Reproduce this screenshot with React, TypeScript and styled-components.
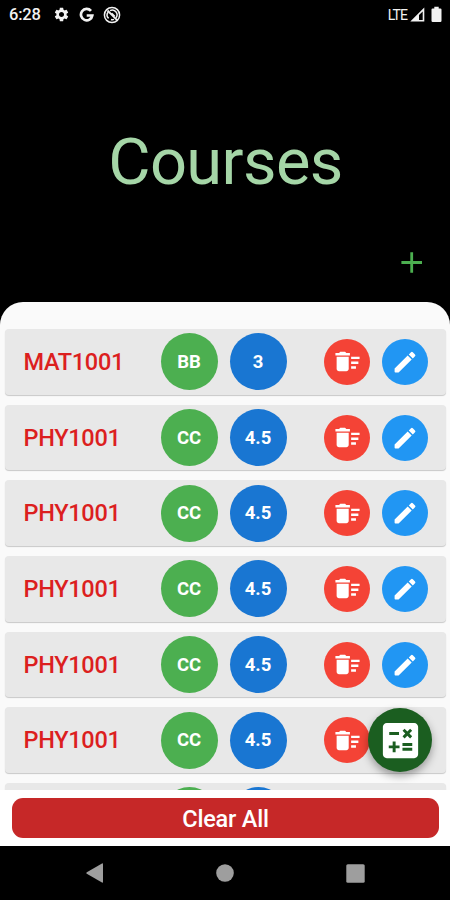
import React from "react";
import styled, { createGlobalStyle } from "styled-components";
import { MdCalculate, MdDeleteSweep, MdSettings } from "react-icons/md";

const GlobalStyle = createGlobalStyle`
  * { box-sizing: border-box; }
  body { margin: 0; background: #000; font-family: Roboto, "Liberation Sans", sans-serif; }
`;

const Screen = styled.div`
  position: relative;
  width: 450px;
  height: 900px;
  display: flex;
  flex-direction: column;
  background: #000;
  overflow: hidden;
`;

const StatusBar = styled.header`
  height: 29px;
  flex: none;
  display: flex;
  align-items: center;
  justify-content: space-between;
  padding: 0 8px 0 9px;
  color: #f2f2f2;
`;

const StatusGroup = styled.div<{ $gap: number }>`
  display: flex;
  align-items: center;
  gap: ${(p) => p.$gap}px;
`;

const Clock = styled.span`
  width: 32px;
  font-size: 16.5px;
  font-weight: 500;
  letter-spacing: -0.2px;
  margin-right: 3px;
`;

const Network = styled.span`
  font-size: 14px;
  letter-spacing: -0.9px;
`;

const Hero = styled.section`
  height: 272.5px;
  flex: none;
  display: flex;
  flex-direction: column;
  align-items: center;
`;

const Title = styled.h1`
  margin: 94px 0 0 1px;
  color: #a5d6a7;
  font-size: 65px;
  font-weight: 400;
  line-height: 78px;
  letter-spacing: -0.6px;
`;

const AddButton = styled.button`
  align-self: flex-end;
  display: flex;
  margin: 50px 26px 0 0;
  padding: 0;
  border: 0;
  background: none;
`;

const Sheet = styled.main`
  height: 544.5px;
  flex: none;
  display: flex;
  flex-direction: column;
  border-radius: 23px 23px 0 0;
  background: #fafafa;
  overflow: hidden;
`;

const CourseList = styled.ul`
  height: 488.5px;
  flex: none;
  margin: 0;
  padding: 27.6px 4px 0 5px;
  list-style: none;
  display: flex;
  flex-direction: column;
  gap: 10px;
  overflow: hidden;
`;

const CourseRow = styled.li`
  height: 65.67px;
  flex: none;
  display: flex;
  align-items: center;
  padding-left: 18.5px;
  border-radius: 4px;
  background: #e8e8e8;
  box-shadow: 0 1px 1px rgba(0, 0, 0, 0.2);
`;

const Code = styled.span`
  width: 137px;
  color: #dc1f1f;
  font-size: 23.5px;
  font-weight: 500;
  letter-spacing: -0.3px;
`;

const Badge = styled.span<{ $color: string }>`
  width: 57px;
  height: 57px;
  margin-right: 12px;
  display: grid;
  place-items: center;
  border-radius: 50%;
  background: ${(p) => p.$color};
  color: #fff;
  font-size: 18.5px;
  font-weight: 700;
`;

const RoundButton = styled.button<{ $color: string }>`
  width: 46px;
  height: 46px;
  margin-right: 11.5px;
  padding: 0;
  border: 0;
  display: grid;
  place-items: center;
  border-radius: 50%;
  background: ${(p) => p.$color};
  color: #fff;
`;

const Actions = styled.div`
  display: flex;
  margin-left: 25.8px;
`;

const Footer = styled.footer`
  flex: 1;
  padding: 7.5px 11px 8px 12px;
  display: flex;
  background: #fff;
`;

const ClearButton = styled.button`
  flex: 1;
  padding: 2px 0 0;
  border: 0;
  border-radius: 11px;
  background: #c62828;
  color: #fff;
  font-family: inherit;
  font-size: 23.5px;
  font-weight: 500;
  letter-spacing: -0.2px;
`;

const CalculateButton = styled.button`
  position: absolute;
  left: 368px;
  top: 708px;
  width: 64px;
  height: 64px;
  padding: 0;
  border: 0;
  display: grid;
  place-items: center;
  border-radius: 50%;
  background: #1b5e20;
  color: #fff;
  box-shadow: 0 4px 8px rgba(0, 0, 0, 0.35);
`;

const NavBar = styled.nav`
  flex: 1;
  display: flex;
  align-items: center;
  justify-content: space-between;
  padding: 0 85.5px 0 86px;
`;

const courses = [
  { code: "MAT1001", grade: "BB", credit: "3" },
  ...Array.from({ length: 6 }, () => ({ code: "PHY1001", grade: "CC", credit: "4.5" })),
];

const GoogleIcon = () => (
  <svg width="15" height="16" viewBox="0 0 15 16" fill="none" stroke="currentColor" strokeWidth="2.7">
    <path d="M12 3.9A5.7 5.7 0 1 0 13.3 8.5H7.7" />
  </svg>
);

const SyncOffIcon = () => (
  <svg width="18" height="18" viewBox="0 0 18 18" fill="none" stroke="currentColor">
    <circle cx="9" cy="9" r="7.6" strokeWidth="1.5" />
    <path d="M5.6 12.4A4.8 4.8 0 0 1 5.2 6M7 4.6A4.8 4.8 0 0 1 13 11.8M11 13.4A4.8 4.8 0 0 1 8 13.6" strokeWidth="1.5" />
    <path d="M4.5 4.5l9.6 9.6M8.6 7.4l3 3" strokeWidth="1.8" />
  </svg>
);

const SignalIcon = () => (
  <svg width="15" height="15" viewBox="0 0 15 15" fill="currentColor">
    <path fillRule="evenodd" d="M14.3.5v14H.3zM12.7 4.4L9 8.1v4.8h3.7z" />
  </svg>
);

const BatteryIcon = () => (
  <svg width="11" height="17" viewBox="0 0 11 17" fill="currentColor">
    <path d="M3.3.7h4.4v1.7h1.6q1.2 0 1.2 1.2v11.2q0 1.2-1.2 1.2H1.7q-1.2 0-1.2-1.2V3.6q0-1.2 1.2-1.2h1.6z" />
  </svg>
);

const PlusIcon = () => (
  <svg width="24" height="24" viewBox="0 0 24 24" stroke="#4caf50" strokeWidth="2.8">
    <path d="M11.7 1.2v20.6M1.4 11.5h20.6" />
  </svg>
);

const PencilIcon = () => (
  <svg width="24" height="24" viewBox="0 0 24 24" fill="currentColor">
    <path d="M1.6 18.6L14.7 5.5l4 4L5.6 22.6H2.4q-.8 0-.8-.8zM15.8 4.4L18 2.2q.9-.9 1.8 0l2.2 2.2q.9.9 0 1.8l-2.2 2.2z" />
  </svg>
);

const BackIcon = () => (
  <svg width="18" height="20" viewBox="0 0 18 20" fill="#9e9e9e">
    <path d="M.8 9.2L16 .5q1-.5 1 .7v17.6q0 1.2-1 .7L.8 10.8q-1-.8 0-1.6z" />
  </svg>
);

const HomeIcon = () => (
  <svg width="18" height="18" viewBox="0 0 18 18" fill="#9e9e9e">
    <circle cx="9" cy="9" r="8.8" />
  </svg>
);

const RecentsIcon = () => (
  <svg width="19" height="19" viewBox="0 0 19 19" fill="#9e9e9e">
    <rect x=".3" y=".3" width="18.4" height="18.4" rx="1.5" />
  </svg>
);

export default function App() {
  return (
    <>
      <GlobalStyle />
      <Screen>
        <StatusBar>
          <StatusGroup $gap={9}>
            <Clock>6:28</Clock>
            <MdSettings size={17} />
            <GoogleIcon />
            <SyncOffIcon />
          </StatusGroup>
          <StatusGroup $gap={3}>
            <Network>LTE</Network>
            <SignalIcon />
            <span />
            <BatteryIcon />
          </StatusGroup>
        </StatusBar>
        <Hero>
          <Title>Courses</Title>
          <AddButton aria-label="Add course"><PlusIcon /></AddButton>
        </Hero>
        <Sheet>
          <CourseList>
            {courses.map((course, i) => (
              <CourseRow key={i}>
                <Code>{course.code}</Code>
                <Badge $color="#4caf50">{course.grade}</Badge>
                <Badge $color="#1976d2">{course.credit}</Badge>
                <Actions>
                  <RoundButton $color="#f44336" aria-label="Delete"><MdDeleteSweep size={29} /></RoundButton>
                  <RoundButton $color="#2196f3" aria-label="Edit"><PencilIcon /></RoundButton>
                </Actions>
              </CourseRow>
            ))}
          </CourseList>
          <Footer>
            <ClearButton>Clear All</ClearButton>
          </Footer>
        </Sheet>
        <NavBar>
          <BackIcon />
          <HomeIcon />
          <RecentsIcon />
        </NavBar>
        <CalculateButton aria-label="Calculate"><MdCalculate size={47} /></CalculateButton>
      </Screen>
    </>
  );
}
